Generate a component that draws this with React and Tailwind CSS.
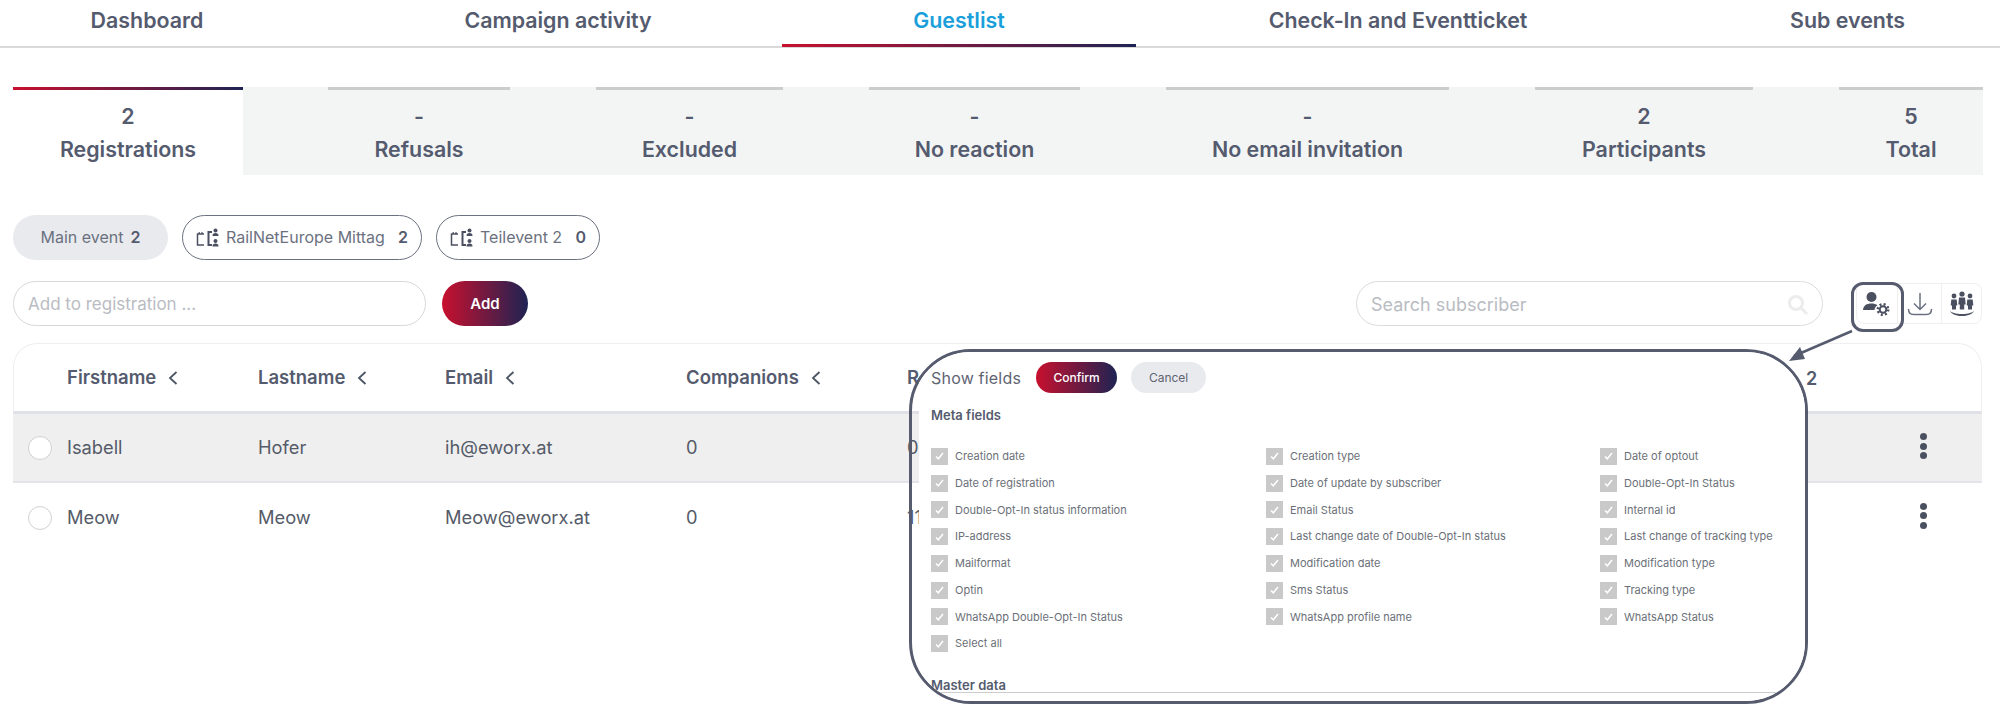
const gradient = 'bg-[linear-gradient(90deg,#c8102e_0%,#1e2353_100%)]';

const navItems = [
  { label: 'Dashboard', cls: 'w-[294px]' },
  { label: 'Campaign activity', cls: 'w-[448px] ml-[40px]' },
  { label: 'Guestlist', cls: 'w-[354px]', active: true },
  { label: 'Check-In and Eventticket', cls: 'w-[524px]' },
  { label: 'Sub events', cls: 'w-[340px] pl-[35px]' },
];

const stats = [
  { value: '-', label: 'Refusals', cls: 'w-[182px]' },
  { value: '-', label: 'Excluded', cls: 'w-[187px]' },
  { value: '-', label: 'No reaction', cls: 'w-[211px]' },
  { value: '-', label: 'No email invitation', cls: 'w-[283px]' },
  { value: '2', label: 'Participants', cls: 'w-[218px]' },
  { value: '5', label: 'Total', cls: 'w-[144px]' },
];

const columns = [
  ['Creation date', 'Date of registration', 'Double-Opt-In status information', 'IP-address', 'Mailformat', 'Optin', 'WhatsApp Double-Opt-In Status', 'Select all'],
  ['Creation type', 'Date of update by subscriber', 'Email Status', 'Last change date of Double-Opt-In status', 'Modification date', 'Sms Status', 'WhatsApp profile name'],
  ['Date of optout', 'Double-Opt-In Status', 'Internal id', 'Last change of tracking type', 'Modification type', 'Tracking type', 'WhatsApp Status'],
];

function SubEventIcon() {
  return (
    <svg width="23" height="20" viewBox="0 0 23 20" fill="none" stroke="#4b5060" strokeWidth="1.5">
      <path d="M8 7H1.500v11H8" />
      <path d="M3.200 5v2M6 5v2" strokeWidth="1.200" />
      <path d="M16 5h-3.500v13H16" strokeWidth="2" />
      <circle cx="19.500" cy="3.500" r="2" fill="#4b5060" stroke="none" />
      <path d="M16.500 9c0-2.200 1-3 3-3s3 .8 3 3z" fill="#4b5060" stroke="none" />
      <circle cx="19.500" cy="14" r="2" fill="#4b5060" stroke="none" />
      <path d="M16.500 19.500c0-2.200 1-3 3-3s3 .8 3 3z" fill="#4b5060" stroke="none" />
    </svg>
  );
}

function UserGearIcon() {
  return (
    <svg width="28" height="26" viewBox="0 0 28 26" fill="#4b5060">
      <circle cx="8.500" cy="6" r="5" />
      <path d="M0 19c.5-4.500 3.500-6.500 8.500-6.500 2.500 0 4.500.5 6 1.700-2 1.200-3 3-3 4.800z" />
      <circle cx="20" cy="18.500" r="3.300" fill="none" stroke="#4b5060" strokeWidth="2" />
      <circle cx="20" cy="18.500" r="5.300" fill="none" stroke="#4b5060" strokeWidth="2.400" strokeDasharray="2 2.160" />
    </svg>
  );
}

function Chevron() {
  return (
    <svg width="10" height="16" viewBox="0 0 10 16" fill="none" stroke="#4b5563" strokeWidth="1.800" className="ml-[12px]">
      <path d="M8.500 2 2 8l6.500 6" />
    </svg>
  );
}

function Kebab({ className }) {
  return (
    <div className={`flex flex-col gap-[2.5px] ${className}`}>
      <span className="w-[7px] h-[7px] rounded-full bg-[#4b5060]" />
      <span className="w-[7px] h-[7px] rounded-full bg-[#4b5060]" />
      <span className="w-[7px] h-[7px] rounded-full bg-[#4b5060]" />
    </div>
  );
}

function Row({ first, last, email, comp, extra, shaded }) {
  return (
    <div className={`flex items-center text-[18.3px] text-[#555b68] ${shaded ? 'h-[69px] bg-[#efefef] border-b-2 border-[#e3e4ea]' : 'h-[70px]'}`}>
      <span className="ml-[15px] w-[24px] h-[24px] rounded-full bg-white border border-[#cfd1d6] shrink-0" />
      <span className="ml-[15px] w-[191px]">{first}</span>
      <span className="w-[187px]">{last}</span>
      <span className="w-[241px]">{email}</span>
      <span className="w-[221px]">{comp}</span>
      <span className="w-[120px]">{extra}</span>
      <span className="ml-auto mr-[55px]"><Kebab className={shaded ? 'mb-[3px]' : 'mb-[5px]'} /></span>
    </div>
  );
}

function FieldRow({ label }) {
  return (
    <div className="flex items-center h-[26.75px]">
      <span className="w-[17px] h-[17px] bg-[#c9c9c9] flex items-center justify-center shrink-0">
        <svg width="9" height="8" viewBox="0 0 9 8" fill="none" stroke="white" strokeWidth="1.500">
          <path d="M1 4.500 3.300 6.800 8 1" />
        </svg>
      </span>
      <span className="ml-[7px] text-[11px] text-[#6b7078] whitespace-nowrap">{label}</span>
    </div>
  );
}

export default function App() {
  return (
    <div className="relative w-[2000px] h-[705px] overflow-hidden bg-white font-['Inter',sans-serif] text-[#555b6e]">
      {/* Top tabs */}
      <div className="flex h-[48px] border-b-2 border-[#d9d9d9]">
        {navItems.map(item => (
          <div key={item.label} className={`relative text-center text-[21.4px] font-semibold leading-[41px] shrink-0 ${item.cls} ${item.active ? 'text-[#1a9fdb]' : ''}`}>
            {item.label}
            {item.active && <span className={`absolute left-0 right-0 top-[44px] h-[3px] ${gradient}`} />}
          </div>
        ))}
      </div>

      {/* Stats */}
      <div className="flex ml-[13px] w-[1970px] h-[88px] mt-[39px] bg-[#f3f5f5] text-[21.4px] font-semibold text-center">
        <div className="w-[230px] bg-white shrink-0 mr-[85px]">
          <div className={`h-[3px] ${gradient}`} />
          <div className="leading-[24px] mt-[14px]">2</div>
          <div className="leading-[24px] mt-[9px]">Registrations</div>
        </div>
        <div className="flex gap-[86px]">
          {stats.map(s => (
            <div key={s.label} className={s.cls}>
              <div className="h-[3px] bg-[#cccccc]" />
              <div className="leading-[24px] mt-[14px]">{s.value}</div>
              <div className="leading-[24px] mt-[9px] whitespace-nowrap">{s.label}</div>
            </div>
          ))}
        </div>
      </div>

      {/* Event pills */}
      <div className="flex ml-[13px] mt-[40px] gap-[14px] text-[16px] text-[#6b7180]">
        <div className="w-[155px] h-[45px] rounded-full bg-[#e9eaee] flex items-center justify-center gap-[7px] pb-[1px]">
          Main event <b className="font-semibold text-[#555b6e]">2</b>
        </div>
        <div className="w-[240px] h-[45px] rounded-full border-[1.5px] border-[#6b7180] flex items-center pl-[13px] pb-[1px]">
          <SubEventIcon />
          <span className="ml-[7px]">RailNetEurope Mittag</span>
          <b className="ml-auto mr-[13px] font-semibold text-[#555b6e]">2</b>
        </div>
        <div className="w-[164px] h-[45px] rounded-full border-[1.5px] border-[#6b7180] flex items-center pl-[13px] pb-[1px]">
          <SubEventIcon />
          <span className="ml-[7px]">Teilevent 2</span>
          <b className="ml-auto mr-[13px] font-semibold text-[#555b6e]">0</b>
        </div>
      </div>

      {/* Add + search row */}
      <div className="flex items-start mt-[21px] ml-[13px] w-[1969px]">
        <div className="w-[413px] h-[45px] rounded-full border border-[#d8d8d8] flex items-center pl-[14px] pt-[2px] text-[17px] text-[#b9bcc2]">
          Add to registration ...
        </div>
        <button className={`ml-[16px] w-[86px] h-[45px] rounded-full text-white text-[15px] font-semibold pt-[2px] ${gradient}`}>Add</button>
        <div className="ml-[828px] w-[467px] h-[45px] rounded-full border border-[#dcdcdc] flex items-center pl-[14px] pr-[13px] pt-[2px] text-[18px] text-[#b9bcc2]">
          Search subscriber
          <svg className="ml-auto" width="22" height="22" viewBox="0 0 22 22" fill="none" stroke="#ececec" strokeWidth="3">
            <circle cx="9" cy="9" r="6.500" />
            <path d="m14 14 6 6" />
          </svg>
        </div>
        <div className="ml-[33px] w-[126px] h-[41px] mt-[2px] flex rounded-[8px] border border-[#efefef]">
          <div className="w-[41px] border-r border-[#efefef] flex items-center justify-center">
            <UserGearIcon />
          </div>
          <div className="w-[44px] border-r border-[#efefef] flex items-center justify-center">
            <svg width="26" height="26" viewBox="0 0 26 26" fill="none" stroke="#6b7180" strokeWidth="1.500">
              <path d="M13 2v16M7 12.500l6 6 6-6" />
              <path d="M1.500 18c0 4 2 5.500 5 5.500h13c3 0 5-1.500 5-5.500" />
            </svg>
          </div>
          <div className="flex-1 flex items-center justify-center">
            <svg width="26" height="26" viewBox="0 0 26 26" fill="#4b5060">
              <circle cx="13" cy="3" r="2.600" />
              <path d="M10 6.500h6l.7 7h-1.500v5h-4.400v-5H9.300z" />
              <circle cx="5" cy="5" r="2.400" />
              <path d="M2.300 8.500h5.400l.6 6H7v4H3v-4H1.700z" />
              <circle cx="21" cy="5" r="2.400" />
              <path d="M18.300 8.500h5.400l.6 6H23v4h-4v-4h-1.300z" />
              <path d="M1 19.500c1 4 7 5.500 12 5.500s11-1.500 12-5.500c-.8 2-6 3.500-12 3.500S1.800 21.500 1 19.500z" />
            </svg>
          </div>
        </div>
      </div>

      {/* Table */}
      <div className="mt-[17px] ml-[13px] w-[1969px]">
        <div className="h-[71px] rounded-t-[24px] border-t border-x border-[#efefef] border-b-[3px] border-b-[#dfe0e8] flex items-center text-[18.5px] font-semibold text-[#555b6e]">
          <span className="ml-[53px] w-[191px] flex items-center">Firstname<Chevron /></span>
          <span className="w-[187px] flex items-center">Lastname<Chevron /></span>
          <span className="w-[241px] flex items-center">Email<Chevron /></span>
          <span className="w-[221px] flex items-center">Companions<Chevron /></span>
          <span className="w-[20px]">R</span>
        </div>
        <Row shaded first="Isabell" last="Hofer" email="ih@eworx.at" comp="0" extra="0" />
        <Row first="Meow" last="Meow" email="Meow@eworx.at" comp="0" extra="11" />
      </div>
      <span className="absolute left-[1806px] top-[367px] text-[18px] font-semibold leading-[24px]">2</span>

      {/* Show fields callout */}
      <div className="absolute left-[909px] top-[349px] w-[899px] h-[355px] rounded-[62px] border-[3px] border-[#565b6e] overflow-hidden">
        <div className="ml-[7px] h-full bg-white pl-[12px] pt-[10px] relative">
          <div className="flex items-center h-[31px]">
            <span className="text-[16px] tracking-[0.2px] text-[#5f6472]">Show fields</span>
            <span className={`ml-[15px] w-[81px] h-[31px] rounded-full text-white text-[12px] font-medium flex items-center justify-center ${gradient}`}>Confirm</span>
            <span className="ml-[14px] w-[75px] h-[31px] rounded-full bg-[#e9eaee] text-[#5f6472] text-[12px] flex items-center justify-center">Cancel</span>
          </div>
          <div className="mt-[14px] text-[13px] font-semibold text-[#555b6e] leading-[16px]">Meta fields</div>
          <div className="grid grid-cols-[335px_334px_1fr] mt-[20px]">
            {columns.map((col, i) => (
              <div key={i}>
                {col.map(label => <FieldRow key={label} label={label} />)}
              </div>
            ))}
          </div>
          <div className="absolute left-0 right-0 bottom-[8px] border-b border-[#cccccc] pl-[12px] text-[13px] font-semibold leading-[19px] h-[17px] overflow-hidden">Master data</div>
        </div>
      </div>

      {/* Highlight on the field settings button + arrow */}
      <div className="absolute left-[1851px] top-[282px] w-[53px] h-[50px] rounded-[12px] border-[3px] border-[#565b6e]" />
      <svg className="absolute left-[1780px] top-[325px]" width="80" height="50" viewBox="0 0 80 50" fill="#565b6e">
        <path d="M72 6 14 31" stroke="#565b6e" strokeWidth="2.500" />
        <path d="M9 36 25 34 20 22z" />
      </svg>
    </div>
  );
}
